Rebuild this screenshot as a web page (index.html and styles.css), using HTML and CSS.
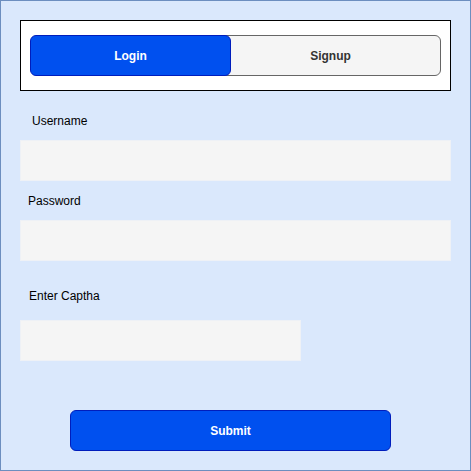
FILE: index.html
```html
<!DOCTYPE html>
<html>
<head>
<meta charset="utf-8">
<link rel="stylesheet" href="styles.css">
</head>
<body>
<div class="frame">
  <div class="tabs">
    <div class="tab tab-active">Login</div>
    <div class="tab tab-idle">Signup</div>
  </div>
  <div class="label label-user">Username</div>
  <div class="field field-wide"></div>
  <div class="label label-pass">Password</div>
  <div class="field field-wide"></div>
  <div class="label label-captcha">Enter Captha</div>
  <div class="field field-short"></div>
  <div class="submit">Submit</div>
</div>
</body>
</html>
```
FILE: styles.css
```css
html, body {
  margin: 0;
  padding: 0;
}
body {
  font-family: "Liberation Sans", Arial, sans-serif;
  font-size: 12px;
}
.frame {
  width: 471px;
  height: 471px;
  box-sizing: border-box;
  border: 1px solid #6c8ebf;
  background: #dae8fc;
  padding: 19px;
  display: flex;
  flex-direction: column;
  align-items: flex-start;
}
.tabs {
  width: 431px;
  height: 71px;
  box-sizing: border-box;
  border: 1px solid #000;
  background: #fff;
  padding: 14px 9px;
  display: flex;
}
.tab {
  height: 41px;
  box-sizing: border-box;
  display: flex;
  align-items: center;
  justify-content: center;
  font-weight: bold;
  font-size: 12px;
}
.tab-active {
  width: 201px;
  background: #0050ef;
  border: 1px solid #001dbc;
  border-radius: 6px;
  color: #fff;
  position: relative;
  z-index: 1;
}
.tab-idle {
  width: 221px;
  margin-left: -11px;
  background: #f5f5f5;
  border: 1px solid #666;
  border-radius: 6px;
  color: #333;
}
.label {
  line-height: 14px;
  color: #000;
}
.label-user {
  margin-top: 23px;
  margin-left: 12px;
}
.label-pass {
  margin-top: 13px;
  margin-left: 8px;
}
.label-captcha {
  margin-top: 28px;
  margin-left: 9px;
}
.field {
  height: 41px;
  box-sizing: border-box;
  background: #f5f5f5;
  border: 1px solid #eef1f6;
  margin-top: 12px;
}
.field-wide {
  width: 431px;
}
.field-short {
  width: 281px;
  margin-top: 17px;
}
.submit {
  margin-top: 49px;
  margin-left: 50px;
  width: 321px;
  height: 41px;
  box-sizing: border-box;
  background: #0050ef;
  border: 1px solid #001dbc;
  border-radius: 6px;
  color: #fff;
  font-weight: bold;
  display: flex;
  align-items: center;
  justify-content: center;
}
```
